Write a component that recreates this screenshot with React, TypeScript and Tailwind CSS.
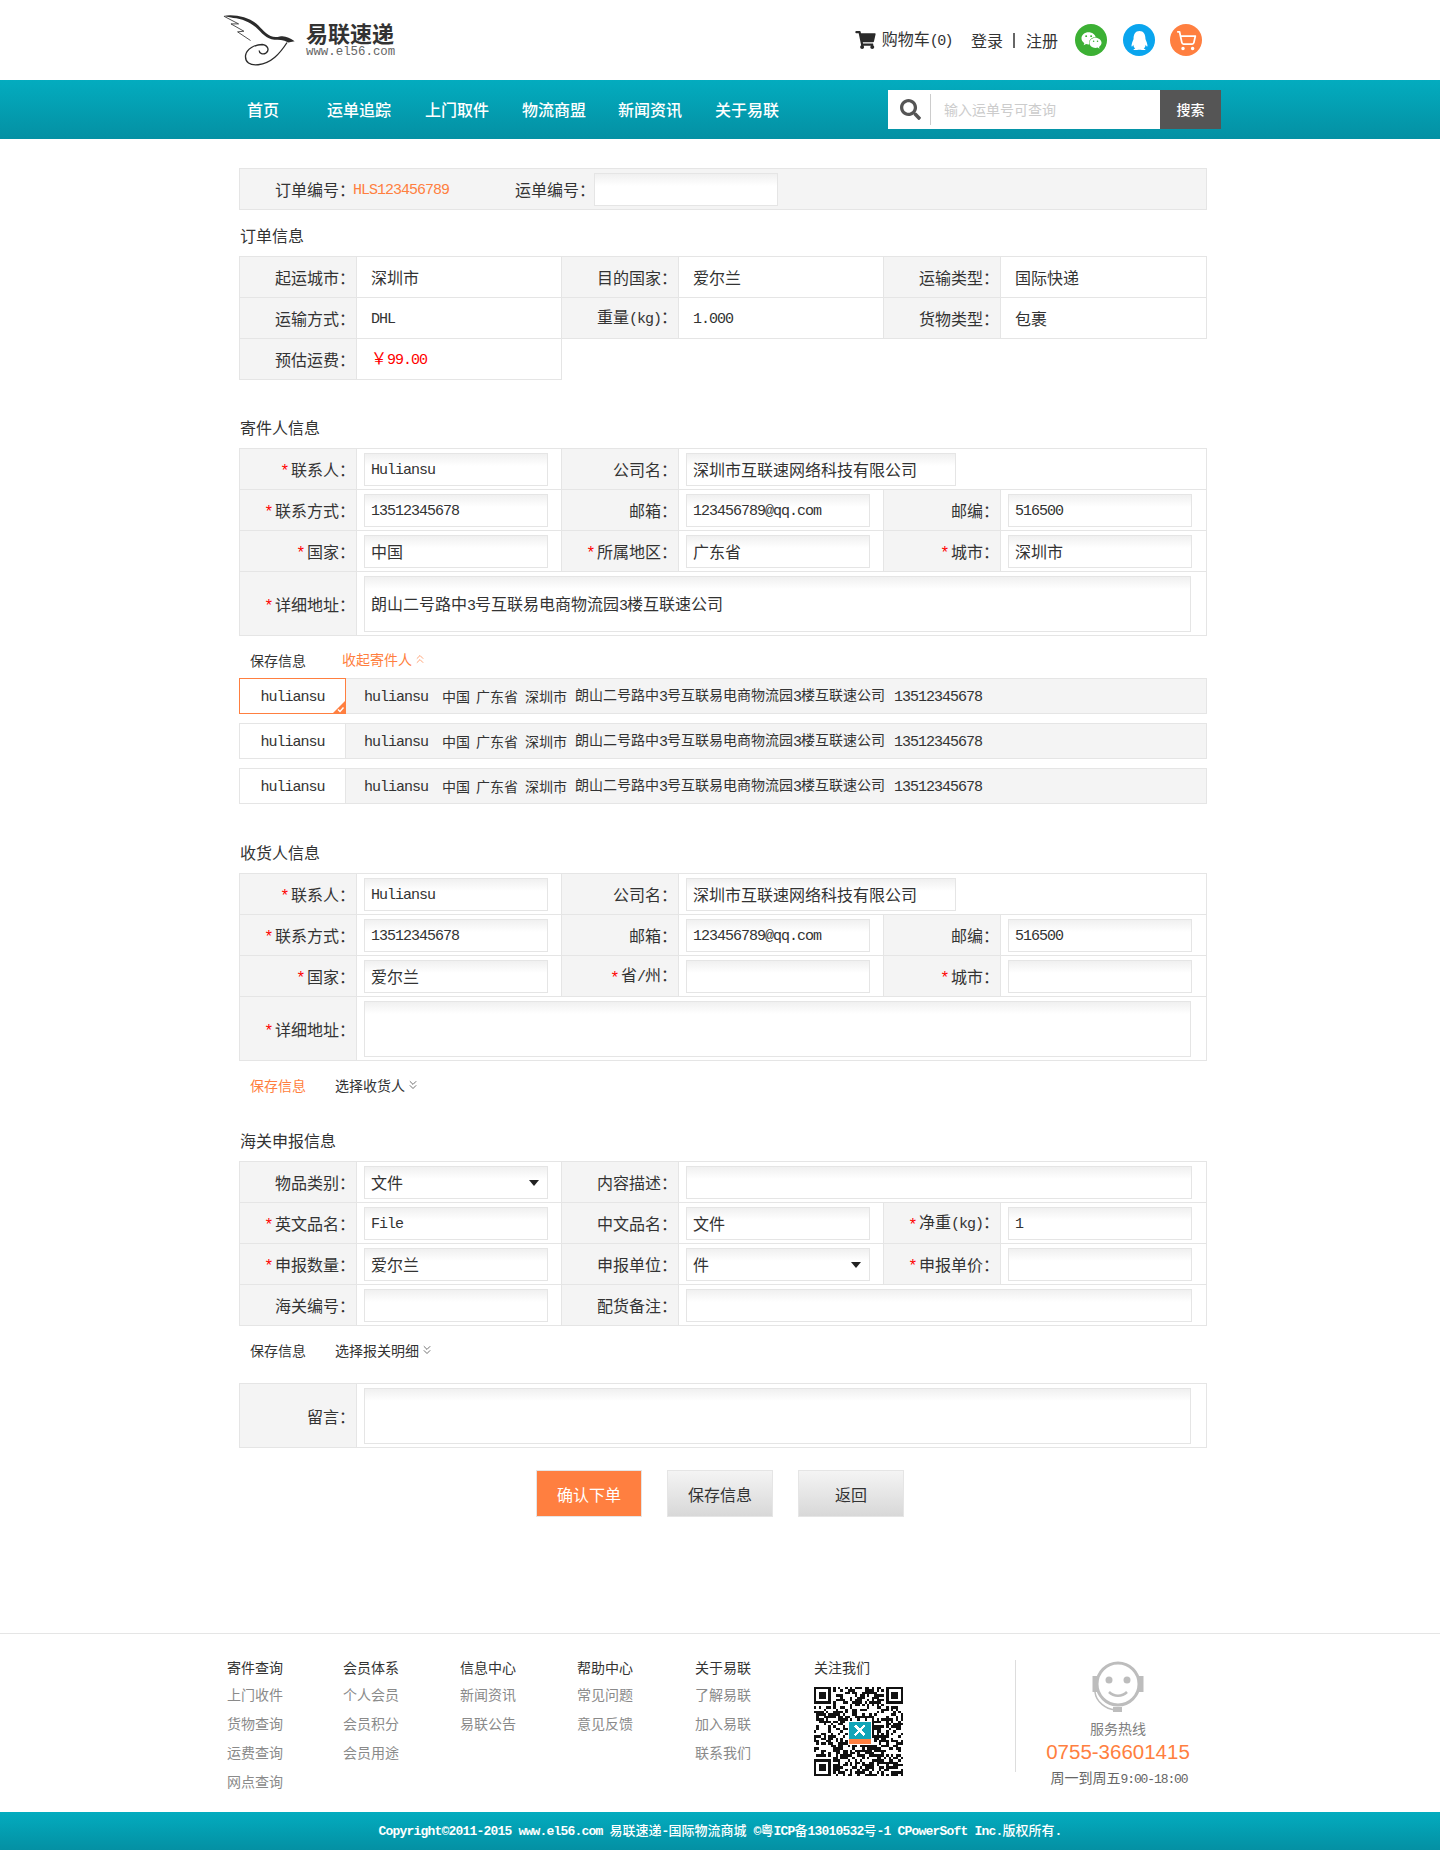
import type { ReactNode } from "react";
import { ChevronsDown, ChevronsUp, ShoppingCart } from "lucide-react";
import { FaQq, FaSearch, FaShoppingCart, FaWeixin } from "react-icons/fa";

const CJK = { fontFamily: '"Noto Sans CJK SC", "Noto Sans", sans-serif' };

// latin runs are half the width of the hanzi in the original, so they get a mono font
function Txt({ s, latin = "text-[15px] tracking-[-1px]" }: { s: string; latin?: string }) {
  const parts = s.split(/([\x20-\x7e©]+)/).filter(Boolean);
  return (
    <>
      {parts.map((p, i) =>
        /^[\x20-\x7e©]+$/.test(p) ? (
          <span key={i} className={`${latin} whitespace-pre [font-family:'Liberation_Mono',monospace]`}>
            {p}
          </span>
        ) : (
          <span key={i}>{p}</span>
        )
      )}
    </>
  );
}

type Col = {
  label: string;
  req?: boolean;
  value?: string;
  input?: "sm" | "md" | "full";
  select?: boolean;
  red?: boolean;
  span?: "three" | "five";
};

const inputCls =
  "h-[33px] border border-[#e5e5e5] bg-[linear-gradient(#f0f0f0,#ffffff_12px)] flex items-center pl-[6px] text-[#333] relative";

const contactLatin = "text-[15px] tracking-[-1px] relative top-px";

function Label({ text, req }: { text: string; req?: boolean }) {
  return (
    <div className="bg-[#f4f4f4] border-r border-b border-[#e5e5e5] flex items-center justify-end pr-px text-[#333] whitespace-nowrap">
      {req && <span className="text-[#f00] mr-[3px] text-[16px] translate-y-[2px] [font-family:'Liberation_Sans',sans-serif]">*</span>}
      <span>
        <Txt s={text} />：
      </span>
    </div>
  );
}

function Cells({ c, tall }: { c: Col; tall?: boolean }) {
  const spanCls = c.span === "five" ? "col-span-5" : c.span === "three" ? "col-span-3" : "";
  const w =
    c.input === "md"
      ? "w-[270px]"
      : c.input === "full"
        ? c.span === "five"
          ? "w-[827px]"
          : "w-[506px]"
        : "w-[184px]";
  return (
    <>
      <Label text={c.label} req={c.req} />
      <div className={`${spanCls} border-r border-b border-[#e5e5e5] flex items-center ${c.input ? "px-[7px]" : "pl-[14px]"}`}>
        {c.input ? (
          <div className={`${inputCls} ${w} ${tall ? "h-[56px] pt-[3px]" : ""}`}>
            {c.value && (
              <span>
                <Txt s={c.value} />
              </span>
            )}
            {c.select && (
              <span className="absolute right-[8px] top-[13px] w-0 h-0 border-x-[5px] border-x-transparent border-t-[6px] border-t-[#222]" />
            )}
          </div>
        ) : (
          <span className={c.red ? "text-[#f00]" : "text-[#333]"}>
            <Txt s={c.value ?? ""} />
          </span>
        )}
      </div>
    </>
  );
}

function Table({ rows }: { rows: { tall?: boolean; cols: Col[] }[] }) {
  return (
    <div className="border-t border-l border-[#e5e5e5] text-[16px]">
      {rows.map((r, i) => (
        <div
          key={i}
          className={`grid grid-cols-[117px_205px_117px_205px_117px_206px] ${r.tall ? "h-[64px]" : "h-[41px]"}`}
        >
          {r.cols.map((c, j) => (
            <Cells key={j} c={c} tall={r.tall} />
          ))}
        </div>
      ))}
    </div>
  );
}

function Title({ children, top }: { children: ReactNode; top: string }) {
  return <h2 className={`${top} pt-[14px] pb-[10px] leading-[22px] text-[16px] font-normal text-[#333] pl-px`}>{children}</h2>;
}

function SaveRow({ saveOn, more, moreOn, up }: { saveOn?: boolean; more: string; moreOn?: boolean; up?: boolean }) {
  const Icon = up ? ChevronsUp : ChevronsDown;
  return (
    <div className="h-[41px] pt-[13px] flex items-start text-[14px] leading-[22px] text-[#333]">
      <span className={`ml-[11px] ${up ? "w-[92px]" : "w-[85px]"} ${saveOn ? "text-[#ff7f40]" : ""}`}>保存信息</span>
      <span className={`flex items-center h-[22px] ${up ? "-mt-[1px]" : ""} ${moreOn ? "text-[#ff7f40]" : ""}`}>
        {more}
        <Icon className="w-[14px] h-[14px] ml-px" strokeWidth={1.2} />
      </span>
    </div>
  );
}

function Contact({ on }: { on?: boolean }) {
  return (
    <div className="flex h-[36px] mb-[9px] text-[14px] text-[#333]">
      <div
        className={`relative w-[107px] shrink-0 flex items-center justify-center bg-white border ${on ? "border-[#ff7f40]" : "border-[#e5e5e5]"}`}
      >
        <span>
          <Txt s="huliansu" latin={contactLatin} />
        </span>
        {on && (
          <svg className="absolute right-0 bottom-0" width="12" height="12" viewBox="0 0 12 12">
            <path d="M12 0V12H0Z" fill="#ff7f40" />
            <path d="M5 8.5l2 2 3.5-4" fill="none" stroke="#fff" strokeWidth="1.4" />
          </svg>
        )}
      </div>
      <div className="flex-1 bg-[#f4f4f4] border-y border-r border-[#e5e5e5] flex items-center pl-[18px] whitespace-nowrap">
        <span className="mr-[14px]"><Txt s="huliansu" latin={contactLatin} /></span>
        <span className="mr-[6px]">中国</span>
        <span className="mr-[7px]">广东省</span>
        <span className="mr-[8px]">深圳市</span>
        <span className="mr-[9px]"><Txt s="朗山二号路中3号互联易电商物流园3楼互联速公司" latin={contactLatin} /></span>
        <span><Txt s="13512345678" latin={contactLatin} /></span>
      </div>
    </div>
  );
}

function Bird() {
  return (
    <svg width="78" height="57" viewBox="60 35 235 170" className="shrink-0">
      <path
        d="M70 46C105 40 150 50 175 74C195 94 210 116 240 108C255 104 270 112 285 122L266 126C250 118 236 118 224 118C200 116 185 96 168 80C150 64 125 54 100 52C92 50 80 48 70 46Z"
        fill="#2b2b2b"
      />
      <path d="M72 47L116 70L93 70L132 92L113 94L152 120" fill="none" stroke="#2b2b2b" strokeWidth="2.5" />
      <path
        d="M262 126C240 160 215 188 175 193C150 196 135 185 137 165C140 145 165 132 187 132C205 134 210 150 198 158C190 163 178 160 178 150"
        fill="none"
        stroke="#2b2b2b"
        strokeWidth="4"
      />
    </svg>
  );
}

function Qr() {
  const n = 37;
  const cells: ReactNode[] = [];
  const finder = (x: number, y: number) => x >= 0 && y >= 0 && x < 8 && y < 8;
  let seed = 71;
  for (let y = 0; y < n; y++) {
    for (let x = 0; x < n; x++) {
      seed = (seed * 1103515245 + 12345) & 0x7fffffff;
      const inFinder = finder(x, y) || finder(x - (n - 8), y) || finder(x, y - (n - 8));
      if (!inFinder && (seed >> 16) % 100 < 52) {
        cells.push(<rect key={`${x}-${y}`} x={x} y={y} width="1" height="1" fill="#111" />);
      }
    }
  }
  const box = (x: number, y: number) => (
    <g key={`f${x}${y}`}>
      <rect x={x} y={y} width="7" height="7" fill="#111" />
      <rect x={x + 1} y={y + 1} width="5" height="5" fill="#fff" />
      <rect x={x + 2} y={y + 2} width="3" height="3" fill="#111" />
    </g>
  );
  return (
    <svg width="89" height="89" viewBox={`0 0 ${n} ${n}`} shapeRendering="crispEdges" className="mt-[10px]">
      {cells}
      {box(0, 0)}
      {box(n - 7, 0)}
      {box(0, n - 7)}
      <rect x="14" y="14" width="10" height="10" fill="#fff" />
      <rect x="14.5" y="14.5" width="9" height="7" fill="#12a5b8" />
      <rect x="14.5" y="21.5" width="9" height="2" fill="#ff7f40" />
      <path d="M17 16l4 4M21 16l-4 4" stroke="#fff" strokeWidth="1" />
    </svg>
  );
}

function Agent() {
  return (
    <svg width="52" height="54" viewBox="0 0 52 54">
      <circle cx="26" cy="24" r="21" fill="none" stroke="#bdbdbd" strokeWidth="3" />
      <rect x="0.5" y="16" width="5" height="16" fill="#bdbdbd" />
      <rect x="46.5" y="16" width="5" height="16" fill="#bdbdbd" />
      <circle cx="17" cy="20" r="3.5" fill="#bdbdbd" />
      <circle cx="35" cy="20" r="3.5" fill="#bdbdbd" />
      <path d="M17 32c5 5 13 5 18 0" fill="none" stroke="#bdbdbd" strokeWidth="2.5" />
      <path d="M3 32c1 10 11 17 20 18" fill="none" stroke="#bdbdbd" strokeWidth="1.5" />
      <rect x="21" y="47" width="9" height="5" fill="#bdbdbd" />
    </svg>
  );
}

const footerCols = [
  { w: "w-[116px]", head: "寄件查询", items: ["上门收件", "货物查询", "运费查询", "网点查询"] },
  { w: "w-[117px]", head: "会员体系", items: ["个人会员", "会员积分", "会员用途"] },
  { w: "w-[117px]", head: "信息中心", items: ["新闻资讯", "易联公告"] },
  { w: "w-[118px]", head: "帮助中心", items: ["常见问题", "意见反馈"] },
  { w: "w-[119px]", head: "关于易联", items: ["了解易联", "加入易联", "联系我们"] },
];

const navItems = [
  { t: "首页", w: "w-[80px]" },
  { t: "运单追踪", w: "w-[98px]" },
  { t: "上门取件", w: "w-[97px]" },
  { t: "物流商盟", w: "w-[96px]" },
  { t: "新闻资讯", w: "w-[97px]" },
  { t: "关于易联", w: "w-[97px]" },
];

const addrCompany = "深圳市互联速网络科技有限公司";

export default function App() {
  return (
    <div style={CJK} className="w-[1440px] h-[1850px] bg-white flex flex-col">
      <header className="h-[80px] shrink-0 flex items-center pl-[220px] pr-[238px]">
        <Bird />
        <div className="ml-[8px] -mt-[2px]">
          <div className="text-[22px] leading-[26px] font-bold text-[#333]">易联速递</div>
          <div className="text-[12.4px] leading-[14px] text-[#666] [font-family:'Liberation_Mono',monospace]">www.el56.com</div>
        </div>
        <div className="ml-auto flex items-center text-[16px] text-[#333]">
          <FaShoppingCart className="w-[21px] h-[18px] text-[#2a2a2a] mr-[6px]" />
          <span><Txt s="购物车(0)" latin="text-[15px] tracking-[-1.6px]" /></span>
          <span className="ml-[19px]">登录</span>
          <span className="ml-[10px] mr-[11px] w-[2px] h-[15px] bg-[#666]" />
          <span>注册</span>
          <span className="ml-[17px] w-[32px] h-[32px] rounded-full bg-[#3cb034] flex items-center justify-center text-white">
            <FaWeixin className="w-[21px] h-[21px]" />
          </span>
          <span className="ml-[16px] w-[32px] h-[32px] rounded-full bg-[#0aa5ee] flex items-center justify-center text-white">
            <FaQq className="w-[19px] h-[19px]" />
          </span>
          <span className="ml-[15px] w-[32px] h-[32px] rounded-full bg-[#ff7f40] flex items-center justify-center text-white">
            <ShoppingCart className="w-[21px] h-[21px]" strokeWidth={2} />
          </span>
        </div>
      </header>

      <nav className="h-[59px] shrink-0 bg-[linear-gradient(#03acbf,#0490a3)] flex items-center pl-[247px] pr-[219px]">
        {navItems.map((n) => (
          <a key={n.t} className={`${n.w} text-white text-[16px] font-medium pb-[2px]`}>
            {n.t}
          </a>
        ))}
        <div className="ml-auto w-[333px] h-[39px] bg-white flex items-center text-[14px]">
          <FaSearch className="ml-[12px] w-[21px] h-[21px] text-[#555]" />
          <span className="ml-[9px] w-px h-[31px] bg-[#ccc]" />
          <span className="ml-[13px] text-[#ccc]">输入运单号可查询</span>
          <button className="ml-auto w-[61px] h-[39px] bg-[#555] text-white text-[14px] font-medium">搜索</button>
        </div>
      </nav>

      <main className="ml-[239px] w-[968px] pt-[29px] flex-1">
        <div className="h-[42px] bg-[#f4f4f4] border border-[#e5e5e5] flex items-center text-[16px] text-[#333]">
          <span className="ml-[35px] w-[78px] whitespace-nowrap pb-px">订单编号：</span>
          <span className="w-[162px] text-[#ff7f40] pb-px"><Txt s="HLS123456789" /></span>
          <span className="w-[79px] whitespace-nowrap pb-px">运单编号：</span>
          <div className={`${inputCls} w-[184px]`} />
        </div>

        <Title top="">订单信息</Title>
        <Table
          rows={[
            { cols: [
              { label: "起运城市", value: "深圳市" },
              { label: "目的国家", value: "爱尔兰" },
              { label: "运输类型", value: "国际快递" },
            ] },
            { cols: [
              { label: "运输方式", value: "DHL" },
              { label: "重量(kg)", value: "1.000" },
              { label: "货物类型", value: "包裹" },
            ] },
            { cols: [{ label: "预估运费", value: "￥99.00", red: true }] },
          ]}
        />

        <Title top="mt-[22px]">寄件人信息</Title>
        <Table
          rows={[
            { cols: [
              { label: "联系人", req: true, value: "Huliansu", input: "sm" },
              { label: "公司名", value: addrCompany, input: "md", span: "three" },
            ] },
            { cols: [
              { label: "联系方式", req: true, value: "13512345678", input: "sm" },
              { label: "邮箱", value: "123456789@qq.com", input: "sm" },
              { label: "邮编", value: "516500", input: "sm" },
            ] },
            { cols: [
              { label: "国家", req: true, value: "中国", input: "sm" },
              { label: "所属地区", req: true, value: "广东省", input: "sm" },
              { label: "城市", req: true, value: "深圳市", input: "sm" },
            ] },
            { tall: true, cols: [
              { label: "详细地址", req: true, value: "朗山二号路中3号互联易电商物流园3楼互联速公司", input: "full", span: "five" },
            ] },
          ]}
        />
        <SaveRow more="收起寄件人" moreOn up />
        <div className="mt-px">
          <Contact on />
          <Contact />
          <Contact />
        </div>

        <Title top="mt-[23px]">收货人信息</Title>
        <Table
          rows={[
            { cols: [
              { label: "联系人", req: true, value: "Huliansu", input: "sm" },
              { label: "公司名", value: addrCompany, input: "md", span: "three" },
            ] },
            { cols: [
              { label: "联系方式", req: true, value: "13512345678", input: "sm" },
              { label: "邮箱", value: "123456789@qq.com", input: "sm" },
              { label: "邮编", value: "516500", input: "sm" },
            ] },
            { cols: [
              { label: "国家", req: true, value: "爱尔兰", input: "sm" },
              { label: "省/州", req: true, input: "sm" },
              { label: "城市", req: true, input: "sm" },
            ] },
            { tall: true, cols: [{ label: "详细地址", req: true, input: "full", span: "five" }] },
          ]}
        />
        <SaveRow saveOn more="选择收货人" />

        <Title top="mt-[13px]">海关申报信息</Title>
        <Table
          rows={[
            { cols: [
              { label: "物品类别", value: "文件", input: "sm", select: true },
              { label: "内容描述", input: "full", span: "three" },
            ] },
            { cols: [
              { label: "英文品名", req: true, value: "File", input: "sm" },
              { label: "中文品名", value: "文件", input: "sm" },
              { label: "净重(kg)", req: true, value: "1", input: "sm" },
            ] },
            { cols: [
              { label: "申报数量", req: true, value: "爱尔兰", input: "sm" },
              { label: "申报单位", value: "件", input: "sm", select: true },
              { label: "申报单价", req: true, input: "sm" },
            ] },
            { cols: [
              { label: "海关编号", input: "sm" },
              { label: "配货备注", input: "full", span: "three" },
            ] },
          ]}
        />
        <SaveRow more="选择报关明细" />

        <div className="mt-[16px]">
          <Table rows={[{ tall: true, cols: [{ label: "留言", input: "full", span: "five" }] }]} />
        </div>

        <div className="mt-[22px] flex justify-center gap-[25px] text-[16px] pr-[6px]">
          <button className="w-[106px] h-[47px] bg-[#ff7f40] border border-[#e5e5e5] text-white">确认下单</button>
          <button className="w-[106px] h-[47px] bg-[linear-gradient(#f4f4f4,#d8d8d8)] border border-[#e5e5e5] text-[#333]">保存信息</button>
          <button className="w-[106px] h-[47px] bg-[linear-gradient(#f4f4f4,#d8d8d8)] border border-[#e5e5e5] text-[#333]">返回</button>
        </div>
      </main>

      <footer className="h-[179px] shrink-0 border-t border-[#e5e5e5] flex pl-[227px] pt-[23px] text-[14px]">
        {footerCols.map((c) => (
          <div key={c.head} className={c.w}>
            <div className="text-[#333] leading-[20px] mb-[7px]">{c.head}</div>
            {c.items.map((i) => (
              <div key={i} className="text-[#8a8a8a] h-[29px] leading-[20px]">
                {i}
              </div>
            ))}
          </div>
        ))}
        <div className="w-[201px]">
          <div className="text-[#333] leading-[20px]">关注我们</div>
          <Qr />
        </div>
        <div className="w-[204px] h-[112px] mt-[3px] border-l border-[#ddd] relative">
          <div className="absolute left-0 right-0 top-0 flex flex-col items-center w-[204px]">
            <Agent />
            <div className="text-[#808080] leading-[20px] mt-[4px]">服务热线</div>
            <div className="text-[#ff7f40] text-[20.5px] leading-[28px] [font-family:'Liberation_Sans',sans-serif]">0755-36601415</div>
            <div className="text-[#666] leading-[22px] ml-[2px]"><Txt s="周一到周五9:00-18:00" latin="text-[13px] tracking-[-1.1px]" /></div>
          </div>
        </div>
      </footer>

      <div className="h-[38px] shrink-0 bg-[linear-gradient(#03acbf,#0490a3)] flex items-center justify-center text-white text-[13px] font-medium">
        <span><Txt s="Copyright©2011-2015 www.el56.com 易联速递-国际物流商城 ©粤ICP备13010532号-1 CPowerSoft Inc.版权所有." latin="text-[13px] tracking-[-0.8px] font-bold" /></span>
      </div>
    </div>
  );
}
